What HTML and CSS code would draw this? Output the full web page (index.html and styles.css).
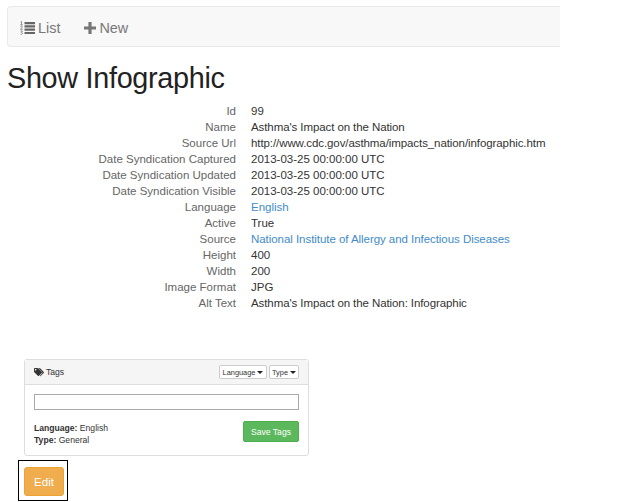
FILE: index.html
```html
<!DOCTYPE html>
<html lang="en">
<head>
<meta charset="utf-8">
<title>Show Infographic</title>
<link rel="stylesheet" href="styles.css">
</head>
<body>
<nav class="navbar">
  <a class="nav-link list-link"><svg class="list-icon" viewBox="0 0 15 14"><path d="M4.5 1H15v2.200H4.500zM4.500 4.300H15v2.200H4.500zM4.500 7.600H15v2.200H4.500zM4.500 10.900H15v2.200H4.500z"/><path class="digits" d="M.6 1.200l1-.7v3.200M.4 3.800h2.400M.5 5.700c.5-1 2-.7 1.800.3L.5 8.300h2.300M.5 10h2L1.400 11.400c1.600 0 1.600 2.200-.9 1.900"/></svg><span>List</span></a>
  <a class="nav-link"><svg class="plus-icon" viewBox="0 0 12 12"><path d="M4.400 0h3.200v4.400H12v3.200H7.600V12H4.400V7.600H0V4.400h4.400z"/></svg><span>New</span></a>
</nav>
<h1>Show Infographic</h1>
<dl class="details">
  <dt>Id</dt><dd>99</dd>
  <dt>Name</dt><dd class="phrase">Asthma's Impact on the Nation</dd>
  <dt>Source Url</dt><dd class="url">http://www.cdc.gov/asthma/impacts_nation/infographic.htm</dd>
  <dt>Date Syndication Captured</dt><dd>2013-03-25 00:00:00 UTC</dd>
  <dt>Date Syndication Updated</dt><dd>2013-03-25 00:00:00 UTC</dd>
  <dt>Date Syndication Visible</dt><dd>2013-03-25 00:00:00 UTC</dd>
  <dt>Language</dt><dd><a>English</a></dd>
  <dt>Active</dt><dd>True</dd>
  <dt>Source</dt><dd class="source"><a>National Institute of Allergy and Infectious Diseases</a></dd>
  <dt>Height</dt><dd>400</dd>
  <dt>Width</dt><dd>200</dd>
  <dt>Image Format</dt><dd>JPG</dd>
  <dt>Alt Text</dt><dd class="phrase">Asthma's Impact on the Nation: Infographic</dd>
</dl>
<section class="panel">
  <header class="panel-head">
    <svg class="tags-icon" viewBox="0 0 18 16"><path fill-rule="evenodd" d="M0 1.500Q0 0 1.500 0H6q1 0 2 1l6 6q1 1 0 2l-5 5q-1 1-2 0L1 8Q0 7 0 6zM3 1.600a1.400 1.400 0 1 0 .1 0z"/><path d="M8 0h1.500q1 0 2 1l6 6q1 1 0 2l-5 5q-1 1-2 .2L15.500 8.500z"/></svg>
    <span class="panel-title">Tags</span>
    <button class="drop language">Language<i class="caret"></i></button>
    <button class="drop type">Type<i class="caret"></i></button>
  </header>
  <div class="panel-body">
    <input class="tag-input" type="text" aria-label="Tags">
    <div class="summary">
      <div class="terms"><div><b>Language:</b> English</div><div><b>Type:</b> General</div></div>
      <button class="save">Save Tags</button>
    </div>
  </div>
</section>
<div class="edit-frame"><button class="edit">Edit</button></div>
</body>
</html>
```
FILE: styles.css
```css
* { box-sizing: border-box; }
html { overflow: hidden; background: #fff; }
body { margin: 0; padding: 6px 0 0 7px; height: 502px; overflow: hidden; font-family: "Liberation Sans", Arial, sans-serif; color: #333; font-size: 11.5px; }
button { font-family: inherit; }
.navbar { width: 553px; height: 41px; background: #f8f8f8; border: 1px solid #e9e9e9; border-right: 0; border-radius: 4px 0 0 4px; display: flex; align-items: center; padding: 2px 0 0 12px; gap: 24px; font-size: 14.4px; color: #777; }
.nav-link { display: flex; align-items: center; gap: 3px; }
.list-icon { width: 15px; height: 14px; fill: #666; }
.digits { fill: none; stroke: #777; stroke-width: .8; }
.plus-icon { width: 12px; height: 12px; fill: #777; }
h1 { margin: 15px 0 0; font-size: 28.8px; line-height: 32px; font-weight: 400; color: #222; white-space: nowrap; letter-spacing: -.3px; }
.details { margin: 9px 0 0; display: grid; grid-template-columns: 229px 1fr; column-gap: 15px; line-height: 16px; white-space: nowrap; }
dt { text-align: right; color: #666; }
dd { margin: 0; }
.url { letter-spacing: -.085px; }
.phrase { letter-spacing: -.09px; }
.source { letter-spacing: -.05px; }
.details a { color: #428bca; }
.panel { margin: 48px 0 0 17px; width: 285px; height: 97px; border: 1px solid #ddd; border-radius: 3px; font-size: 8.6px; }
.panel-head { height: 25px; background: #f5f5f5; border-bottom: 1px solid #ddd; display: flex; align-items: center; padding: 0 9px; }
.tags-icon { width: 10px; height: 9px; fill: #333; }
.panel-title { margin-left: 2px; margin-right: auto; }
.drop { height: 14px; padding: 0; border: 1px solid #ccc; border-radius: 2px; background: #fff; color: #333; font-size: 7.4px; display: flex; align-items: center; justify-content: center; gap: 2px; margin-left: 2px; }
.language { width: 48px; }
.type { width: 30px; }
.caret { border-top: 3px solid #222; border-left: 3px solid transparent; border-right: 3px solid transparent; }
.panel-body { padding: 9px 9px 0; }
.tag-input { display: block; width: 100%; height: 16px; border: 1px solid #aaa; padding: 0 3px; background: #fff; }
.summary { display: flex; justify-content: space-between; margin-top: 11px; }
.terms { line-height: 12px; padding-top: 1px; }
.save { width: 56px; height: 21px; padding: 0; border: 1px solid #4cae4c; border-radius: 2px; background: #5cb85c; color: #fff; font-size: 8.6px; }
.edit-frame { width: 50px; height: 41px; margin: 4px 0 0 11px; border: 1px solid #000; display: flex; padding: 6px 0 0 5px; }
.edit { width: 40px; height: 29px; padding: 0; border: 1px solid #eea236; border-radius: 3px; background: #f0ad4e; color: #fff; font-size: 11.5px; }
```
